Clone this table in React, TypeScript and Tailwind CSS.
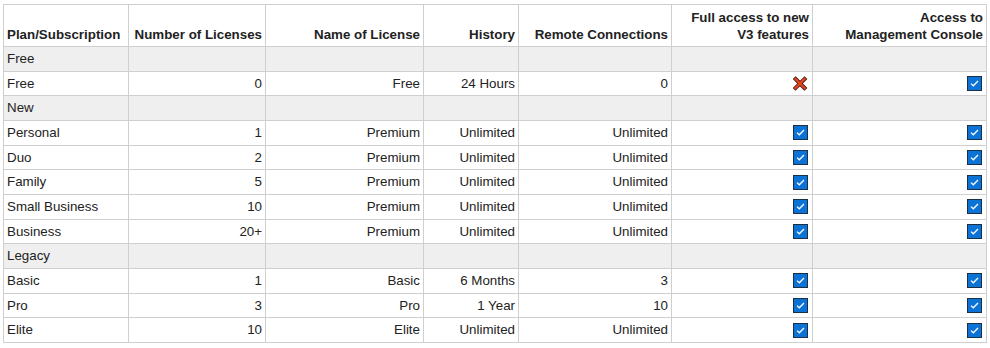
import React from "react";

type Row =
  | { group: string }
  | { plan: string; num: string; name: string; hist: string; remote: string; v3: boolean; mc: boolean };

const rows: Row[] = [
  { group: "Free" },
  { plan: "Free", num: "0", name: "Free", hist: "24 Hours", remote: "0", v3: false, mc: true },
  { group: "New" },
  { plan: "Personal", num: "1", name: "Premium", hist: "Unlimited", remote: "Unlimited", v3: true, mc: true },
  { plan: "Duo", num: "2", name: "Premium", hist: "Unlimited", remote: "Unlimited", v3: true, mc: true },
  { plan: "Family", num: "5", name: "Premium", hist: "Unlimited", remote: "Unlimited", v3: true, mc: true },
  { plan: "Small Business", num: "10", name: "Premium", hist: "Unlimited", remote: "Unlimited", v3: true, mc: true },
  { plan: "Business", num: "20+", name: "Premium", hist: "Unlimited", remote: "Unlimited", v3: true, mc: true },
  { group: "Legacy" },
  { plan: "Basic", num: "1", name: "Basic", hist: "6 Months", remote: "3", v3: true, mc: true },
  { plan: "Pro", num: "3", name: "Pro", hist: "1 Year", remote: "10", v3: true, mc: true },
  { plan: "Elite", num: "10", name: "Elite", hist: "Unlimited", remote: "Unlimited", v3: true, mc: true },
];

function Check() {
  return (
    <svg width="15" height="15" viewBox="0 0 15 15" className="inline-block align-middle">
      <rect x="0.5" y="0.5" width="14" height="14" fill="#0b72d6" stroke="#1d2f45" />
      <path d="M4 7.6 L6.3 9.8 L11 5" fill="none" stroke="#ffffff" strokeWidth="1.3" />
    </svg>
  );
}

function Cross() {
  return (
    <svg width="15" height="15" viewBox="0 0 15 15" className="inline-block align-middle">
      <path d="M2.5 3 L11.5 12 M11.5 3 L2.5 12" stroke="#3a1a10" strokeWidth="4" strokeLinecap="square" />
      <path d="M2.5 3 L11.5 12 M11.5 3 L2.5 12" stroke="#e8431f" strokeWidth="2.4" strokeLinecap="square" />
    </svg>
  );
}

const td = "border border-[#cfcfcf] px-[3px] py-0 h-[24.67px] leading-none";
const th = "border border-[#cfcfcf] px-[3px] pb-[3px] align-bottom font-bold leading-[17px]";

export default function App() {
  return (
    <div className="bg-white w-[990px] h-[348px] pt-[4px] pl-[3px] text-[13.33px] text-[#222]" style={{ fontFamily: '"Liberation Sans", Arial, sans-serif' }}>
      <table className="border-collapse table-fixed w-[984px]">
        <colgroup>
          <col className="w-[125px]" />
          <col className="w-[137px]" />
          <col className="w-[158px]" />
          <col className="w-[95px]" />
          <col className="w-[153px]" />
          <col className="w-[141px]" />
          <col className="w-[174px]" />
        </colgroup>
        <thead>
          <tr className="h-[42px]">
            <th className={`${th} text-left`}>Plan/Subscription</th>
            <th className={`${th} text-right`}>Number of Licenses</th>
            <th className={`${th} text-right`}>Name of License</th>
            <th className={`${th} text-right`}>History</th>
            <th className={`${th} text-right`}>Remote Connections</th>
            <th className={`${th} text-right`}>
              Full access to new
              <br />
              V3 features
            </th>
            <th className={`${th} text-right`}>
              Access to
              <br />
              Management Console
            </th>
          </tr>
        </thead>
        <tbody>
          {rows.map((r, i) =>
            "group" in r ? (
              <tr key={i} className="bg-[#efefef]">
                <td className={`${td} text-left`}>{r.group}</td>
                <td className={td}></td>
                <td className={td}></td>
                <td className={td}></td>
                <td className={td}></td>
                <td className={td}></td>
                <td className={td}></td>
              </tr>
            ) : (
              <tr key={i}>
                <td className={`${td} text-left`}>{r.plan}</td>
                <td className={`${td} text-right`}>{r.num}</td>
                <td className={`${td} text-right`}>{r.name}</td>
                <td className={`${td} text-right`}>{r.hist}</td>
                <td className={`${td} text-right`}>{r.remote}</td>
                <td className={`${td} text-right pr-[4px]`}>{r.v3 ? <Check /> : <Cross />}</td>
                <td className={`${td} text-right pr-[4px]`}>{r.mc ? <Check /> : <Cross />}</td>
              </tr>
            )
          )}
        </tbody>
      </table>
    </div>
  );
}
